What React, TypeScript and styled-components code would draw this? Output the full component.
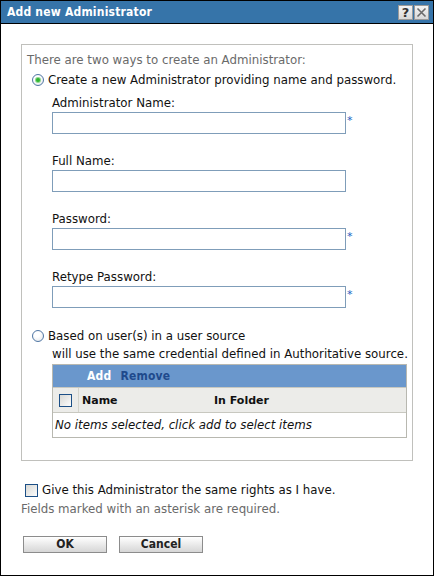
import React from "react";
import styled, { createGlobalStyle } from "styled-components";

const Global = createGlobalStyle`
  html, body { margin: 0; padding: 0; background: #fff; }
  body { font-family: "DejaVu Sans", Verdana, sans-serif; font-size: 11.8px; }
`;

const Window = styled.div`
  width: 434px;
  height: 576px;
  box-sizing: border-box;
  border: 1px solid #000;
  display: flex;
  flex-direction: column;
  background: #fff;
`;

const TitleBar = styled.div`
  height: 22px;
  background: #3674a9;
  border-bottom: 1px solid #000;
  display: flex;
  align-items: center;
  justify-content: space-between;
  padding: 0 4px 0 6px;
`;

const Title = styled.div`
  color: #fff;
  font-family: "DejaVu Sans Condensed", "DejaVu Sans", sans-serif;
  font-weight: bold;
  font-size: 12px;
  letter-spacing: 0.2px;
`;

const TitleButtons = styled.div`
  display: flex;
  gap: 1px;
`;

const TitleButton = styled.div`
  width: 15px;
  height: 15px;
  background: linear-gradient(#f4f4f4, #d8d8d8);
  border: 1px solid #9a9a9a;
  box-sizing: border-box;
  display: flex;
  align-items: center;
  justify-content: center;
  color: #333;
  font-weight: bold;
  font-size: 13px;
  line-height: 1;
`;

const Content = styled.div`
  flex: 1;
  display: flex;
  flex-direction: column;
  padding: 20px 20px 0 20px;
`;

const Fieldset = styled.div`
  width: 392px;
  height: 417px;
  box-sizing: border-box;
  border: 1px solid #c0c0bc;
  padding: 7px 0 0 0;
  display: flex;
  flex-direction: column;
`;

const Intro = styled.div`
  color: #6a6a6a;
  line-height: 16px;
  padding-left: 5px;
`;

const RadioRow = styled.label<{ $top: number }>`
  display: flex;
  align-items: center;
  gap: 4px;
  margin-top: ${(p) => p.$top}px;
  padding-left: 10px;
  line-height: 16px;
  color: #111;
`;

const Radio = styled.span<{ $checked?: boolean }>`
  width: 12px;
  height: 12px;
  box-sizing: border-box;
  border-radius: 50%;
  border: 1px solid #4f76a4;
  background: radial-gradient(circle at 40% 35%, #fff 30%, #dfe3e8 100%);
  display: flex;
  align-items: center;
  justify-content: center;
  &::after {
    content: "";
    display: ${(p) => (p.$checked ? "block" : "none")};
    width: 4px;
    height: 4px;
    border-radius: 50%;
    background: #2fb52f;
    box-shadow: 0 0 0 1px #8fd88f;
  }
`;

const Fields = styled.div`
  display: flex;
  flex-direction: column;
  gap: 19px;
  padding-left: 30px;
  margin-top: 7px;
`;

const Field = styled.div`
  display: flex;
  flex-direction: column;
  gap: 1px;
`;

const Label = styled.div`
  line-height: 16px;
  color: #111;
`;

const InputRow = styled.div`
  display: flex;
  align-items: flex-start;
`;

const Input = styled.input`
  width: 294px;
  height: 22px;
  box-sizing: border-box;
  border: 1px solid #7f9db9;
  margin: 0;
  padding: 2px 3px;
  font: inherit;
`;

const Asterisk = styled.span`
  color: #2060c0;
  font-size: 11px;
  line-height: 14px;
  margin-left: 1px;
  margin-top: 2px;
`;

const Note = styled.div`
  line-height: 16px;
  color: #111;
  padding-left: 30px;
  margin-top: 2px;
  white-space: nowrap;
`;

const Table = styled.div`
  margin: 2px 0 0 30px;
  width: 355px;
  box-sizing: border-box;
  border: 1px solid #b8b8b0;
  display: flex;
  flex-direction: column;
`;

const Toolbar = styled.div`
  height: 22px;
  background: #6a97cc;
  display: flex;
  align-items: center;
  gap: 9px;
  padding-left: 34px;
  font-family: "DejaVu Sans Condensed", "DejaVu Sans", sans-serif;
  font-weight: bold;
  font-size: 12px;
  letter-spacing: 0.2px;
`;

const ToolLink = styled.span<{ $active?: boolean }>`
  color: ${(p) => (p.$active ? "#fff" : "#1f4a8c")};
`;

const HeaderRow = styled.div`
  height: 24px;
  background: #ecece9;
  border-top: 1px solid #c8c8c0;
  border-bottom: 1px solid #c8c8c0;
  display: grid;
  grid-template-columns: 26px 132px 1fr;
  align-items: center;
  font-weight: bold;
  font-size: 11px;
  color: #111;
`;

const HeaderCell = styled.div<{ $divider?: boolean }>`
  height: 100%;
  display: flex;
  align-items: center;
  padding-left: ${(p) => (p.$divider ? "0" : "3px")};
  justify-content: ${(p) => (p.$divider ? "center" : "flex-start")};
  border-right: ${(p) => (p.$divider ? "1px solid #d4d4cc" : "none")};
`;

const Checkbox = styled.span`
  width: 13px;
  height: 13px;
  box-sizing: border-box;
  border: 1px solid #1c4f86;
  background: linear-gradient(135deg, #d8d8d4, #fcfcfc);
  display: inline-block;
  flex-shrink: 0;
`;

const EmptyRow = styled.div`
  height: 24px;
  display: flex;
  align-items: center;
  padding-left: 2px;
  font-style: italic;
  color: #111;
`;

const CheckRow = styled.label`
  display: flex;
  align-items: center;
  gap: 4px;
  margin-top: 21px;
  padding-left: 4px;
  line-height: 16px;
  color: #111;
`;

const Hint = styled.div`
  color: #6a6a6a;
  line-height: 16px;
  margin-top: 3px;
`;

const Buttons = styled.div`
  display: flex;
  gap: 12px;
  margin-top: 19px;
  padding-left: 2px;
`;

const Button = styled.button`
  width: 84px;
  height: 17px;
  box-sizing: border-box;
  border: 1px solid #8c8c8c;
  background: linear-gradient(#ffffff, #e6e6e6 60%, #d6d6d6);
  font-family: "DejaVu Sans Condensed", "DejaVu Sans", sans-serif;
  font-weight: bold;
  font-size: 12px;
  line-height: 13px;
  color: #222;
  padding: 0;
  margin: 0;
`;

const fields = [
  { label: "Administrator Name:", required: true },
  { label: "Full Name:", required: false },
  { label: "Password:", required: true },
  { label: "Retype Password:", required: true },
];

export default function App() {
  return (
    <>
      <Global />
      <Window>
        <TitleBar>
          <Title>Add new Administrator</Title>
          <TitleButtons>
            <TitleButton>?</TitleButton>
            <TitleButton>
              <svg width="11" height="11" viewBox="0 0 11 11">
                <path d="M1.5 1.5 L9.5 9.5 M9.5 1.5 L1.5 9.5" stroke="#6a6a6a" strokeWidth="1.6" />
              </svg>
            </TitleButton>
          </TitleButtons>
        </TitleBar>
        <Content>
          <Fieldset>
            <Intro>There are two ways to create an Administrator:</Intro>
            <RadioRow $top={4}>
              <Radio $checked />
              Create a new Administrator providing name and password.
            </RadioRow>
            <Fields>
              {fields.map((f) => (
                <Field key={f.label}>
                  <Label>{f.label}</Label>
                  <InputRow>
                    <Input type={f.label.includes("Password") ? "password" : "text"} />
                    {f.required && <Asterisk>*</Asterisk>}
                  </InputRow>
                </Field>
              ))}
            </Fields>
            <RadioRow $top={20}>
              <Radio />
              Based on user(s) in a user source
            </RadioRow>
            <Note>will use the same credential defined in Authoritative source.</Note>
            <Table>
              <Toolbar>
                <ToolLink $active>Add</ToolLink>
                <ToolLink>Remove</ToolLink>
              </Toolbar>
              <HeaderRow>
                <HeaderCell $divider>
                  <Checkbox />
                </HeaderCell>
                <HeaderCell>Name</HeaderCell>
                <HeaderCell>In Folder</HeaderCell>
              </HeaderRow>
              <EmptyRow>No items selected, click add to select items</EmptyRow>
            </Table>
          </Fieldset>
          <CheckRow>
            <Checkbox />
            Give this Administrator the same rights as I have.
          </CheckRow>
          <Hint>Fields marked with an asterisk are required.</Hint>
          <Buttons>
            <Button>OK</Button>
            <Button>Cancel</Button>
          </Buttons>
        </Content>
      </Window>
    </>
  );
}
